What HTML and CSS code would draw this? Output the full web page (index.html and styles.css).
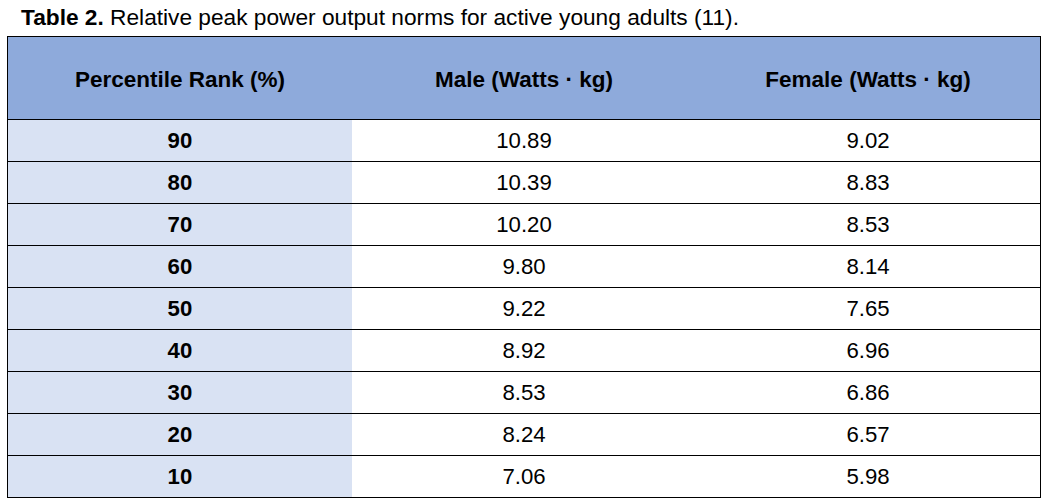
FILE: index.html
```html
<!DOCTYPE html>
<html>
<head>
<meta charset="utf-8">
<link rel="stylesheet" href="styles.css">
</head>
<body>
<p class="caption"><b>Table 2.</b> Relative peak power output norms for active young adults (11).</p>
<table class="norms">
  <thead>
    <tr><th>Percentile Rank (%)</th><th>Male (Watts · kg)</th><th>Female (Watts · kg)</th></tr>
  </thead>
  <tbody>
    <tr><td class="rank">90</td><td>10.89</td><td>9.02</td></tr>
    <tr><td class="rank">80</td><td>10.39</td><td>8.83</td></tr>
    <tr><td class="rank">70</td><td>10.20</td><td>8.53</td></tr>
    <tr><td class="rank">60</td><td>9.80</td><td>8.14</td></tr>
    <tr><td class="rank">50</td><td>9.22</td><td>7.65</td></tr>
    <tr><td class="rank">40</td><td>8.92</td><td>6.96</td></tr>
    <tr><td class="rank">30</td><td>8.53</td><td>6.86</td></tr>
    <tr><td class="rank">20</td><td>8.24</td><td>6.57</td></tr>
    <tr><td class="rank">10</td><td>7.06</td><td>5.98</td></tr>
  </tbody>
</table>
</body>
</html>
```
FILE: styles.css
```css
html, body {
  margin: 0;
  padding: 0;
  background: #ffffff;
}
body {
  font-family: "Liberation Sans", Arial, sans-serif;
  color: #000;
}
.caption {
  margin: 0;
  padding: 4px 0 0 21px;
  height: 36px;
  box-sizing: border-box;
  font-size: 22.7px;
  line-height: 26px;
}
.norms {
  margin-left: 7px;
  width: 1034px;
  border-collapse: collapse;
  table-layout: fixed;
  border: 1px solid #000;
}
.norms th {
  background: #8eaadb;
  height: 83px;
  padding: 4px 0 0;
  box-sizing: border-box;
  font-size: 22.5px;
  font-weight: bold;
  text-align: center;
  border-bottom: 1px solid #000;
}
.norms td {
  height: 41px;
  padding: 0;
  font-size: 22.2px;
  text-align: center;
  border-bottom: 1px solid #000;
}
.norms td.rank {
  background: #d9e2f3;
  font-weight: bold;
}
```
